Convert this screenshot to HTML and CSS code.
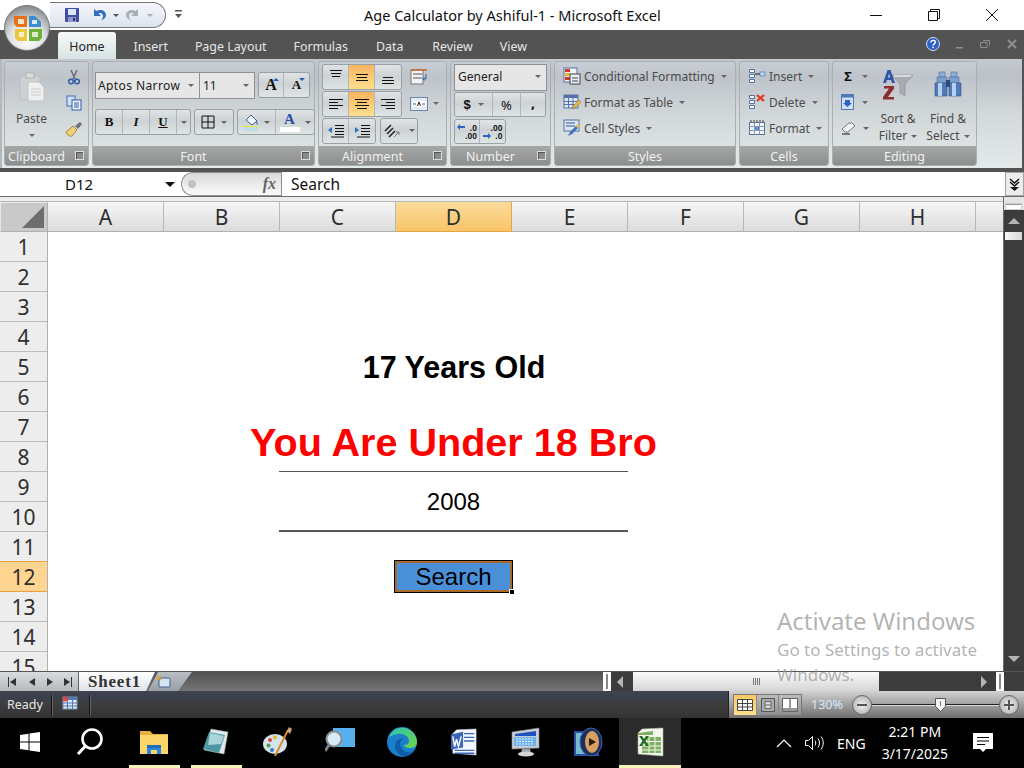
FILE: index.html
```html
<!DOCTYPE html>
<html>

<head>
<meta charset="utf-8">
<title>Age Calculator by Ashiful-1 - Microsoft Excel</title>
<link rel="stylesheet" href="styles.css">
</head>

<body>
<div class="app">

<!-- office button sits over the title bar and the tab strip -->
<div class="office-btn">
    <svg viewBox="0 0 46 46" width="46" height="46">
        <defs>
            <radialGradient id="orb" cx="50%" cy="75%" r="70%">
                <stop offset="0" stop-color="#ffffff"/>
                <stop offset="0.55" stop-color="#dfe1e2"/>
                <stop offset="1" stop-color="#8e9193"/>
            </radialGradient>
        </defs>
        <circle cx="23" cy="23" r="22.5" fill="url(#orb)" stroke="#6f7274"/>
        <path d="M10 11h13v11h-10l-3-3z" fill="#e8701f"/>
        <rect x="14" y="14" width="6" height="5" fill="#f5e3c8"/>
        <path d="M25 11h6l6 6v5h-12z" fill="#3d8ecb"/>
        <rect x="28" y="15" width="5" height="4" fill="#dbeaf5"/>
        <path d="M11 24h12v12h-9l-3-3z" fill="#f0c63c"/>
        <rect x="15" y="27" width="5" height="5" fill="#fbf2c9"/>
        <path d="M25 24h13v9l-3 3h-10z" fill="#6fb03c"/>
        <rect x="28" y="27" width="6" height="5" fill="#dcecc9"/>
    </svg>
</div>

<header class="titlebar">
    <div class="qat">
        <svg viewBox="0 0 16 16" width="16" height="16">
            <rect x="1" y="1" width="14" height="14" rx="1" fill="#3f4fa8"/>
            <rect x="4" y="2" width="8" height="6" fill="#dfe6f5"/>
            <rect x="4" y="10" width="8" height="5" fill="#8f98c8"/>
            <rect x="9" y="11" width="2" height="3" fill="#2b3580"/>
        </svg>
        <svg class="qat-undo" viewBox="0 0 16 16" width="16" height="16">
            <path d="M3 2v7h7L7.500 6.500c2-1 4.500 0 4.500 2.500 0 1.500-.5 3-2 4.500 3-1 5-3 5-5.500C15 4 10 1.500 5.500 4z" fill="#2f6fc0"/>
        </svg>
        <span class="caret qat-caret"></span>
        <svg class="qat-redo" viewBox="0 0 16 16" width="16" height="16">
            <path d="M13 2v7H6l2.500-2.500c-2-1-4.500 0-4.500 2.500 0 1.500.5 3 2 4.500-3-1-5-3-5-5.500C1 4 6 1.500 10.500 4z" fill="#a9b0b8"/>
        </svg>
        <span class="caret qat-caret qat-caret-off"></span>
    </div>
    <svg class="qat-more" viewBox="0 0 8 10" width="8" height="10">
        <rect x="0" y="0" width="7" height="1.500" fill="#555"/>
        <path d="M0 4h7L3.500 8z" fill="#555"/>
    </svg>
    <div class="title">Age Calculator by Ashiful-1 - Microsoft Excel</div>
    <div class="win-btns">
        <svg viewBox="0 0 14 14" width="14" height="14"><path d="M1 7.500h12" stroke="#111" fill="none"/></svg>
        <svg viewBox="0 0 14 14" width="14" height="14"><path d="M1.500 3.500h9v9h-9zM3.500 3.500v-2h9v9h-2" stroke="#111" fill="none"/></svg>
        <svg viewBox="0 0 14 14" width="14" height="14"><path d="M1 1l12 12M13 1L1 13" stroke="#111" fill="none"/></svg>
    </div>
</header>

<nav class="tabs">
    <span class="tab tab-active">Home</span>
    <span class="tab tab-second">Insert</span>
    <span class="tab">Page Layout</span>
    <span class="tab">Formulas</span>
    <span class="tab tab-data">Data</span>
    <span class="tab tab-review">Review</span>
    <span class="tab">View</span>
    <div class="tabs-right">
        <svg viewBox="0 0 14 14" width="14" height="14">
            <circle cx="7" cy="7" r="6.500" fill="#2e62c8" stroke="#cfdcf5"/>
            <path d="M4.800 5.300c.3-2.600 4.600-2.500 4.500 0 0 1.700-2.200 1.700-2.200 3.300" fill="none" stroke="#fff" stroke-width="1.400"/>
            <rect x="6.300" y="9.600" width="1.500" height="1.500" fill="#fff"/>
        </svg>
        <svg class="doc-btn" viewBox="0 0 10 10" width="10" height="10"><rect x="1" y="8" width="7" height="1.500" fill="#8d8f92"/></svg>
        <svg class="doc-btn" viewBox="0 0 10 10" width="10" height="10"><path d="M.5 3.500h6.500v5H.5zM3 1.500h6.500v5" fill="none" stroke="#8d8f92"/></svg>
        <svg class="doc-btn" viewBox="0 0 10 10" width="10" height="10"><path d="M1 1l8 8M9 1L1 9" stroke="#8d8f92" stroke-width="2"/></svg>
    </div>
</nav>

<section class="ribbon">

    <div class="grp grp-clipboard">
        <div class="grp-body">
            <div class="paste">
                <svg viewBox="0 0 26 30" width="26" height="30">
                    <rect x="1" y="4" width="20" height="24" rx="2" fill="#cfd0d2" stroke="#bcbdbf"/>
                    <rect x="7" y="1" width="8" height="5" fill="#dcdcdc" stroke="#b0b1b3"/>
                    <path d="M9 10h11l5 5v14H9z" fill="#efefef" stroke="#c4c4c6"/>
                    <path d="M12 17h10M12 20h10M12 23h10" stroke="#cbcbcd"/>
                </svg>
                <span class="paste-label">Paste</span>
                <span class="caret"></span>
            </div>
            <div class="clip-tools">
                <svg viewBox="0 0 14 16" width="14" height="16">
                    <path d="M4 1l4 9M10 1L6 10" stroke="#6a6e78" stroke-width="1.500" fill="none"/>
                    <circle cx="4" cy="12.500" r="2.300" fill="none" stroke="#2f5ca8" stroke-width="1.500"/>
                    <circle cx="10" cy="12.500" r="2.300" fill="none" stroke="#2f5ca8" stroke-width="1.500"/>
                </svg>
                <svg viewBox="0 0 16 16" width="16" height="16">
                    <rect x="1" y="1" width="8" height="10" fill="#cfe0f5" stroke="#3f6fb5"/>
                    <rect x="6" y="5" width="9" height="10" fill="#eaf2fb" stroke="#2f5ca8"/>
                    <path d="M8 8h5M8 10h5M8 12h5" stroke="#2f5ca8"/>
                </svg>
                <svg viewBox="0 0 18 16" width="18" height="16">
                    <path d="M1 11l7-6 4 4-5 6c-2 1-5-1-6-4z" fill="#ecd07a" stroke="#a98a3a"/>
                    <path d="M10 5l5-4 2 2-4 5z" fill="#6d6f80"/>
                </svg>
            </div>
        </div>
        <div class="grp-foot"><span>Clipboard</span><i class="launcher"></i></div>
    </div>

    <div class="grp grp-font">
        <div class="grp-body font-body">
            <div class="font-row">
                <div class="combo combo-font"><span>Aptos Narrow</span><span class="caret"></span></div>
                <div class="combo combo-size"><span>11</span><span class="caret"></span></div>
                <div class="btn-set size-set">
                    <span class="btn btn-grow">A<i class="mini-up"></i></span>
                    <span class="btn btn-shrink">A<i class="mini-down"></i></span>
                </div>
            </div>
            <div class="font-row font-row-2">
                <div class="btn-set">
                    <span class="btn btn-style style-b">B</span>
                    <span class="btn btn-style style-i">I</span>
                    <span class="btn btn-style style-u">U</span>
                    <span class="btn btn-caret"><span class="caret"></span></span>
                </div>
                <div class="btn-set">
                    <span class="btn btn-borders">
                        <svg viewBox="0 0 14 14" width="14" height="14"><path d="M1 1h12v12H1zM7 1v12M1 7h12" fill="none" stroke="#111"/></svg>
                        <span class="caret"></span>
                    </span>
                </div>
                <div class="btn-set">
                    <span class="btn btn-color">
                        <svg viewBox="0 0 16 18" width="16" height="18">
                            <path d="M3 7l5-5 6 6-5 4z" fill="#eef3f8" stroke="#3d5f8f"/>
                            <path d="M14 8c1 2 1 3 0 4-1-1-1-2 0-4z" fill="#3d6fc0"/>
                            <rect x="0" y="13" width="15" height="1" fill="#f2e82a"/>
                            <rect x="0" y="14" width="15" height="4" fill="#bcdcea"/>
                        </svg>
                        <span class="caret"></span>
                    </span>
                    <span class="btn btn-color">
                        <span class="font-color">A</span>
                        <span class="caret"></span>
                    </span>
                </div>
            </div>
        </div>
        <div class="grp-foot"><span>Font</span><i class="launcher"></i></div>
    </div>

    <div class="grp grp-align">
        <div class="grp-body align-body">
            <div class="align-row">
                <div class="btn-set">
                    <span class="btn btn-al"><svg viewBox="0 0 14 14" width="14" height="14"><path d="M1 .5h12M2 3.500h10M3 6.500h8" stroke="#111"/></svg></span>
                    <span class="btn btn-al btn-on"><svg viewBox="0 0 14 14" width="14" height="14"><path d="M1 4.500h12M2 7.500h10M1 10.500h12" stroke="#111"/></svg></span>
                    <span class="btn btn-al"><svg viewBox="0 0 14 14" width="14" height="14"><path d="M2 7.500h10M1 10.500h12M1 13.500h12" stroke="#111"/></svg></span>
                </div>
                <svg class="align-side" viewBox="0 0 18 16" width="18" height="16">
                    <rect x="1" y="1" width="12" height="14" fill="#f2f2f2" stroke="#777"/>
                    <path d="M1 1h16" stroke="#c4642a" stroke-width="1.500"/>
                    <path d="M3 5h9M3 9h9" stroke="#555"/>
                    <path d="M16 5v5h-3l1.500-1.500M13 10l1.500 1.500" stroke="#2f5ca8" fill="none"/>
                </svg>
            </div>
            <div class="align-row">
                <div class="btn-set">
                    <span class="btn btn-al"><svg viewBox="0 0 14 14" width="14" height="14"><path d="M0 2.500h14M0 5.500h9M0 8.500h14M0 11.500h9" stroke="#111"/></svg></span>
                    <span class="btn btn-al btn-on"><svg viewBox="0 0 14 14" width="14" height="14"><path d="M0 2.500h14M2 5.500h10M0 8.500h14M2 11.500h10" stroke="#111"/></svg></span>
                    <span class="btn btn-al"><svg viewBox="0 0 14 14" width="14" height="14"><path d="M0 2.500h14M5 5.500h9M0 8.500h14M5 11.500h9" stroke="#111"/></svg></span>
                </div>
                <svg class="align-side" viewBox="0 0 18 16" width="18" height="16">
                    <rect x=".5" y="1.500" width="17" height="13" fill="#e6edf6" stroke="#6f88a8"/>
                    <rect x="2" y="5" width="14" height="6" fill="#fff"/>
                    <path d="M3 8h3M12 8h3" stroke="#2f5ca8"/>
                    <path d="M7.500 10l1.500-4 1.500 4" stroke="#222" fill="none"/>
                </svg>
                <span class="caret"></span>
            </div>
            <div class="align-row">
                <div class="btn-set">
                    <span class="btn btn-al">
                        <svg viewBox="0 0 16 14" width="16" height="14"><path d="M7 1.500h9M7 4.500h9M7 7.500h9M7 10.500h9M3 13h13" stroke="#111"/><path d="M0 6l4-3v6z" fill="#2f6fc0"/></svg>
                    </span>
                    <span class="btn btn-al">
                        <svg viewBox="0 0 16 14" width="16" height="14"><path d="M7 1.500h9M7 4.500h9M7 7.500h9M7 10.500h9M3 13h13" stroke="#111"/><path d="M5 6L1 3v6z" fill="#2f6fc0"/></svg>
                    </span>
                </div>
                <div class="btn-set">
                    <span class="btn btn-orient">
                        <svg viewBox="0 0 16 16" width="16" height="16"><path d="M1 8l6-6M3 11l6-6M5 14l6-6" stroke="#222" stroke-width="1.500"/><path d="M10 14l5-5M15 9v3M15 9h-3" stroke="#777" fill="none"/></svg>
                        <span class="caret"></span>
                    </span>
                </div>
            </div>
        </div>
        <div class="grp-foot"><span>Alignment</span><i class="launcher"></i></div>
    </div>

    <div class="grp grp-number">
        <div class="grp-body number-body">
            <div class="combo combo-number"><span>General</span><span class="caret"></span></div>
            <div class="btn-set number-set">
                <span class="btn btn-money">$<span class="caret"></span></span>
                <span class="btn btn-pct">%</span>
                <span class="btn btn-comma">,</span>
            </div>
            <div class="btn-set decimal-set">
                <span class="btn btn-dec"><i class="dec-arrow dec-left"></i><b>.0<br>.00</b></span>
                <span class="btn btn-dec"><i class="dec-arrow dec-right"></i><b>.00<br>.0</b></span>
            </div>
        </div>
        <div class="grp-foot"><span>Number</span><i class="launcher"></i></div>
    </div>

    <div class="grp grp-styles">
        <div class="grp-body list-body">
            <div class="list-item">
                <svg viewBox="0 0 18 18" width="18" height="18">
                    <rect x="1" y="1" width="13" height="14" fill="#eef3fa" stroke="#5572a5"/>
                    <rect x="2" y="2" width="5" height="3" fill="#d23a2a"/>
                    <rect x="2" y="6" width="5" height="3" fill="#f0b429"/>
                    <rect x="2" y="10" width="5" height="3" fill="#d23a2a"/>
                    <rect x="7" y="7" width="10" height="10" fill="#e8eef5" stroke="#444"/>
                    <path d="M9 11h6M9 14h6" stroke="#444"/>
                </svg>
                <span>Conditional Formatting</span><span class="caret"></span>
            </div>
            <div class="list-item">
                <svg viewBox="0 0 18 18" width="18" height="18">
                    <rect x="1" y="2" width="14" height="13" fill="#dbe6f4" stroke="#5572a5"/>
                    <rect x="1" y="2" width="14" height="3" fill="#5572a5"/>
                    <path d="M1 8.500h14M1 11.500h14M5.500 5v10M10 5v10" stroke="#5572a5"/>
                    <path d="M9 16l2-4 5-5 2 2-5 5z" fill="#e8b840" stroke="#a06e1a" stroke-width=".5"/>
                </svg>
                <span>Format as Table</span><span class="caret"></span>
            </div>
            <div class="list-item">
                <svg viewBox="0 0 18 18" width="18" height="18">
                    <rect x="1" y="1" width="15" height="11" fill="#dbe6f4" stroke="#5572a5"/>
                    <path d="M3 4h9M3 7h9" stroke="#6f88b8" stroke-width="1.500"/>
                    <path d="M5 17l2-4 6-6 2 2-6 6z" fill="#3f6fc0"/>
                    <path d="M13 7l2-2 2 2-2 2z" fill="#e8b840"/>
                </svg>
                <span>Cell Styles</span><span class="caret"></span>
            </div>
        </div>
        <div class="grp-foot grp-foot-plain"><span>Styles</span></div>
    </div>

    <div class="grp grp-cells">
        <div class="grp-body list-body">
            <div class="list-item">
                <svg viewBox="0 0 18 18" width="18" height="18">
                    <path d="M1.500 2.500h5v3h-5zM1.500 7.500h5v3h-5zM1.500 12.500h5v3h-5z" fill="#f4f7fb" stroke="#5572a5"/>
                    <path d="M7 7h5" stroke="#111"/>
                    <rect x="12" y="5" width="5" height="4" fill="#bcd6f0" stroke="#3d6fb0" stroke-width=".6"/>
                </svg>
                <span>Insert</span><span class="caret"></span>
            </div>
            <div class="list-item">
                <svg viewBox="0 0 18 18" width="18" height="18">
                    <path d="M1.500 2.500h5v3h-5zM1.500 7.500h5v3h-5zM1.500 12.500h5v3h-5z" fill="#f4f7fb" stroke="#5572a5"/>
                    <path d="M9 2l7 6M16 2L9 8" stroke="#e03a20" stroke-width="2.200"/>
                </svg>
                <span>Delete</span><span class="caret"></span>
            </div>
            <div class="list-item">
                <svg viewBox="0 0 18 18" width="18" height="18">
                    <rect x="1.500" y="3.500" width="15" height="12" fill="#f2f5fa" stroke="#5d6f90"/>
                    <path d="M1.500 7.500h15M1.500 11.500h15M6.500 3.500v12M11.500 3.500v12" stroke="#8c99b2"/>
                    <rect x="7" y="8" width="4" height="3" fill="#4f8fdc"/>
                    <path d="M3 1v2M6 1v2M9 1v2M12 1v2M15 1v2" stroke="#444"/>
                </svg>
                <span>Format</span><span class="caret"></span>
            </div>
        </div>
        <div class="grp-foot grp-foot-plain"><span>Cells</span></div>
    </div>

    <div class="grp grp-editing">
        <div class="grp-body edit-body">
            <div class="edit-small">
                <div class="edit-item"><span class="sigma">Σ</span><span class="caret"></span></div>
                <div class="edit-item">
                    <svg viewBox="0 0 14 16" width="14" height="16">
                        <rect x=".5" y=".5" width="12" height="15" fill="#cfe0f5" stroke="#4f79b8"/>
                        <rect x=".5" y=".5" width="12" height="3" fill="#4f79b8"/>
                        <path d="M4 6h5v3h2l-4.500 4L2 9h2z" fill="#2f62c0"/>
                    </svg>
                    <span class="caret"></span>
                </div>
                <div class="edit-item">
                    <svg viewBox="0 0 15 14" width="15" height="14">
                        <path d="M1 8l7-6h3l3 3-7 6H4z" fill="#f3f5f8" stroke="#6b7584"/>
                        <path d="M1 13h8" stroke="#111"/>
                    </svg>
                    <span class="caret"></span>
                </div>
            </div>
            <div class="edit-big">
                <svg viewBox="0 0 32 32" width="32" height="32">
                    <path d="M10 6h21l-8 9v12l-5-3v-9z" fill="#a8acb1" stroke="#85898f" stroke-width=".6"/>
                    <path d="M11 6h19l-2 2H13z" fill="#d9dcdf"/>
                    <path d="M1 14L5.500 1h3L13 14h-3l-1-3H5l-1 3zM5.800 8.500h2.400L7 4.500z" fill="#2f55a8"/>
                    <path d="M2 17h10v2.500L6 28h6v2.500H1V28l6-8.500H2z" fill="#8a2f2f"/>
                </svg>
                <span class="edit-big-label">Sort &amp;<br>Filter<span class="caret"></span></span>
            </div>
            <div class="edit-big">
                <svg viewBox="0 0 32 32" width="32" height="32">
                    <path d="M7 3h6v5H7zM19 3h6v5h-6z" fill="#8fb0d8" stroke="#4f6f9f" stroke-width=".6"/>
                    <path d="M5 8h10v6H5zM17 8h10v6H17z" fill="#7d9fcb" stroke="#4f6f9f" stroke-width=".6"/>
                    <path d="M3 14h12v13H3zM17 14h12v13H17z" fill="#4f7cb8" stroke="#35527f" stroke-width=".6"/>
                    <path d="M6 14h4v13H6zM20 14h4v13h-4z" fill="#b5cfec"/>
                    <rect x="14" y="11" width="4" height="7" fill="#2f4a78"/>
                </svg>
                <span class="edit-big-label">Find &amp;<br>Select<span class="caret"></span></span>
            </div>
        </div>
        <div class="grp-foot grp-foot-plain"><span>Editing</span></div>
    </div>

</section>

<section class="formula-bar">
    <div class="name-box"><span>D12</span><i class="name-arrow"></i></div>
    <div class="fx-pill"><i class="fx-dot"></i><span class="fx">fx</span></div>
    <div class="formula-input">Search</div>
    <div class="formula-expand">
        <svg viewBox="0 0 11 13" width="11" height="13"><path d="M1 1l4.500 4L10 1M1 4l4.500 4L10 4" fill="none" stroke="#111" stroke-width="1.500"/><path d="M1 9h9l-4.500 4z" fill="#111"/></svg>
    </div>
</section>

<section class="sheet">
    <div class="sheet-main">
        <div class="col-head">
            <div class="corner"><i></i></div>
            <div class="col">A</div>
            <div class="col">B</div>
            <div class="col">C</div>
            <div class="col col-on">D</div>
            <div class="col">E</div>
            <div class="col">F</div>
            <div class="col">G</div>
            <div class="col">H</div>
            <div class="col col-rest"></div>
        </div>
        <div class="sheet-body">
            <div class="row-head">
                <div class="row">1</div>
                <div class="row">2</div>
                <div class="row">3</div>
                <div class="row">4</div>
                <div class="row">5</div>
                <div class="row">6</div>
                <div class="row">7</div>
                <div class="row">8</div>
                <div class="row">9</div>
                <div class="row">10</div>
                <div class="row">11</div>
                <div class="row row-on">12</div>
                <div class="row">13</div>
                <div class="row">14</div>
                <div class="row">15</div>
            </div>
            <div class="cells">
                <div class="cell cell-age">17 Years Old</div>
                <div class="cell cell-msg">You Are Under 18 Bro</div>
                <div class="cell cell-year">2008</div>
                <div class="cell cell-btn">Search</div>
            </div>
        </div>
    </div>
    <div class="vscroll">
        <i class="split-h"></i>
        <div class="vscroll-up"><i class="arrow-up"></i></div>
        <i class="vscroll-thumb"></i>
        <i class="arrow-down"></i>
    </div>
</section>

<section class="sheet-tabs">
    <div class="sheet-nav">
        <svg viewBox="0 0 70 12" width="70" height="12">
            <path d="M6.500 1v10" stroke="#333"/><path d="M14 2v8l-6-4z" fill="#333"/>
            <path d="M33 2v8l-6-4z" fill="#333"/>
            <path d="M45 2v8l6-4z" fill="#333"/>
            <path d="M62 2v8l6-4z" fill="#333"/><path d="M69.500 1v10" stroke="#333"/>
        </svg>
    </div>
    <div class="sheet-tab">Sheet1</div>
    <div class="new-tab">
        <svg viewBox="0 0 16 14" width="16" height="14">
            <rect x="3" y="3" width="11" height="9" rx="1" fill="#d7e3f2" stroke="#3f5f8f"/>
            <path d="M3 3l2 2M1 1l2 2M5 1L1 5" stroke="#e8a020" stroke-width="1.500"/>
        </svg>
    </div>
    <div class="tabs-fill"></div>
    <i class="split-v"></i>
    <div class="hscroll">
        <i class="arrow-left"></i>
        <div class="hscroll-thumb"><i class="grip"></i></div>
        <i class="arrow-right"></i>
    </div>
    <i class="split-v"></i>
    <div class="tabs-end"></div>
</section>

<footer class="statusbar">
    <span class="ready">Ready</span>
    <i class="status-sep"></i>
    <svg class="macro" viewBox="0 0 16 14" width="16" height="14">
        <rect x="1" y="1" width="14" height="12" fill="#dce6f5" stroke="#7f93b5"/>
        <rect x="1" y="1" width="14" height="3" fill="#5577b0"/>
        <path d="M1 7h14M1 10h14M5.500 4v9M10.500 4v9" stroke="#5577b0"/>
        <circle cx="3" cy="3" r="2.500" fill="#e0443a"/>
    </svg>
    <i class="status-sep status-sep-2"></i>
    <div class="status-right">
        <div class="views">
            <span class="view view-on">
                <svg viewBox="0 0 16 12" width="16" height="12"><path d="M.5.500h15v11H.5zM.5 4.500h15M.5 8h15M5.500.5v11M10.500.5v11" fill="#fff" stroke="#444"/></svg>
            </span>
            <span class="view">
                <svg viewBox="0 0 16 14" width="16" height="14"><path d="M1.500.5h13v13h-13z" fill="#aaa" stroke="#555"/><path d="M5 3.500h6v7H5zM5 7h6" fill="#ddd" stroke="#666"/></svg>
            </span>
            <span class="view">
                <svg viewBox="0 0 16 14" width="16" height="14"><path d="M.5.500h15v13H.5z" fill="#999" stroke="#666"/><path d="M1 1h6v9H1zM9 1h6v9H9z" fill="#fff"/></svg>
            </span>
        </div>
        <span class="zoom-pct">130%</span>
        <span class="zoom-btn"><i class="zoom-minus"></i></span>
        <div class="zoom-track">
            <svg class="zoom-thumb" viewBox="0 0 11 14" width="11" height="14"><path d="M.5.500h10v8l-5 5-5-5z" fill="#f1f1f1" stroke="#555"/><path d="M5.500 3v5" stroke="#777"/></svg>
        </div>
        <span class="zoom-btn"><i class="zoom-minus"></i><i class="zoom-plus"></i></span>
    </div>
</footer>

<div class="watermark">
    <div class="wm-title">Activate Windows</div>
    <div class="wm-sub">Go to Settings to activate Windows.</div>
</div>

<footer class="taskbar">
    <div class="task task-start">
        <svg viewBox="0 0 20 20" width="20" height="20"><path d="M0 3l8.500-1.200v7.700H0zM9.500 1.600L20 0v9.500H9.500zM0 10.500h8.500v7.700L0 17zM9.500 10.500H20V20L9.500 18.400z" fill="#fff"/></svg>
    </div>
    <div class="task task-search">
        <svg viewBox="0 0 28 28" width="28" height="28"><circle cx="16" cy="11" r="9.500" fill="none" stroke="#fff" stroke-width="2.600"/><path d="M9.500 18L2 26" stroke="#fff" stroke-width="3"/></svg>
    </div>
    <div class="task task-first task-open">
        <svg viewBox="0 0 28 24" width="28" height="24">
            <path d="M0 1h10l3 3h15v20H0z" fill="#e9b13a"/>
            <rect x="0" y="5" width="28" height="19" fill="#fbd66b"/>
            <path d="M7 24v-8h14v8h-4v-4h-6v4z" fill="#2b88d8"/>
            <rect x="7" y="15" width="14" height="3" fill="#1f6fb8"/>
        </svg>
    </div>
    <div class="task task-open">
        <svg viewBox="0 0 28 28" width="28" height="28">
            <path d="M9 1l17 3-4 22L2 22z" fill="#dfe9ec" stroke="#9fb0b5" stroke-width=".5"/>
            <path d="M7 4l16 3-6 18L1 21z" fill="#4e97a4"/>
            <path d="M8 5l14 3-3 8-13 1z" fill="#a8d4da"/>
        </svg>
    </div>
    <div class="task">
        <svg viewBox="0 0 30 30" width="30" height="30">
            <ellipse cx="12" cy="17" rx="12" ry="10" fill="#d4e4ee"/>
            <circle cx="7" cy="13" r="2" fill="#d8483a"/>
            <circle cx="12" cy="10.500" r="2" fill="#e8b830"/>
            <circle cx="5.500" cy="18.500" r="2" fill="#4aa04a"/>
            <circle cx="9" cy="23" r="2" fill="#3a78c8"/>
            <path d="M12 29L25 3" stroke="#e0892a" stroke-width="2"/>
            <path d="M24 4l2-4 3 2-2 5z" fill="#c9a878"/>
        </svg>
    </div>
    <div class="task">
        <svg viewBox="0 0 30 30" width="30" height="30">
            <rect x="8" y="1" width="22" height="19" fill="#57b0ee"/>
            <circle cx="9" cy="12" r="7.500" fill="#d8eaf6" stroke="#8a8f96" stroke-width="2"/>
            <path d="M4 18l-4 6" stroke="#7d8288" stroke-width="3"/>
        </svg>
    </div>
    <div class="task">
        <svg viewBox="0 0 30 30" width="30" height="30">
            <defs>
                <linearGradient id="edge" x1="0" y1="0" x2="1" y2="1">
                    <stop offset="0" stop-color="#2fc4b2"/>
                    <stop offset="1" stop-color="#6fd44a"/>
                </linearGradient>
            </defs>
            <circle cx="15" cy="15" r="15" fill="#1a7fc8"/>
            <path d="M2 10C5 2 14-1 21 2c6 3 9 8 9 13 0 4-3 6-7 6-3 0-6-1-6-3 3 0 5-1 5-4 0-5-6-8-11-7-4 .5-7 2-9 3z" fill="url(#edge)"/>
            <path d="M8 19c0-5 4-8 9-7-4 1-5 4-3 8 2 5 7 7 13 4-3 4-8 6-12 5-4-2-7-6-7-10z" fill="#0f5da8"/>
        </svg>
    </div>
    <div class="task">
        <svg viewBox="0 0 30 30" width="28" height="28">
            <path d="M7 2l21-1v28L3 27V6z" fill="#f4f6fb" stroke="#b6bfd6" stroke-width=".6"/>
            <path d="M1 7l13-3v17L1 23z" fill="#3a67b8"/>
            <path d="M15 6h11M15 10h11M15 14h11M5 24h21M5 27h21" stroke="#3a67b8" stroke-width="1.500"/>
            <path d="M3 9l2 11 2-8 2 8 3-11" fill="none" stroke="#fff" stroke-width="1.500"/>
        </svg>
    </div>
    <div class="task">
        <svg viewBox="0 0 30 30" width="30" height="30">
            <path d="M1 5l27-4v20L1 22z" fill="#c8ccd2" stroke="#8a8f96" stroke-width=".6"/>
            <path d="M4 7l21-3v5H4z" fill="#1f50c0"/>
            <path d="M3 10h22v9H3z" fill="#6eb3ec"/>
            <path d="M5 12h18M5 14.500h18M5 17h18" stroke="#dff0fc" stroke-dasharray="2 1"/>
            <path d="M11 22h8l1 4h-10z" fill="#9ea3a8"/>
            <ellipse cx="15" cy="27" rx="8" ry="2.500" fill="#d4d6d8"/>
        </svg>
    </div>
    <div class="task">
        <svg viewBox="0 0 30 30" width="30" height="30">
            <rect x="1" y="4" width="25" height="25" fill="#2c4fa8"/>
            <rect x="3" y="6" width="21" height="21" fill="#78bcd0"/>
            <ellipse cx="18" cy="15" rx="11" ry="14" fill="#1b2e5e" stroke="#3b64a8"/>
            <ellipse cx="19" cy="15" rx="7" ry="11" fill="#d8a060"/>
            <path d="M16 11l7 4-7 4z" fill="#2a1a10"/>
        </svg>
    </div>
    <div class="task task-current">
        <svg viewBox="0 0 30 30" width="30" height="30">
            <path d="M7 2l21-1v28L3 27V6z" fill="#f2f6ee" stroke="#a8b89a" stroke-width=".6"/>
            <path d="M3 6l15-2v4H3z" fill="#7fb060"/>
            <path d="M12 10h14v16H7v-8h5z" fill="#7fb060"/>
            <path d="M12 14.500h14M7 19h19M7 23h19M14 10v16M20 10v16" stroke="#f2f6ee"/>
            <path d="M4 9h3l2 3 2-3h3l-3.500 5 3.500 5h-3l-2-3-2 3H4l3.500-5z" fill="#1e6b22"/>
        </svg>
    </div>
    <div class="tray">
        <svg viewBox="0 0 16 9" width="16" height="9"><path d="M1 8l7-7 7 7" fill="none" stroke="#fff" stroke-width="1.200"/></svg>
        <svg viewBox="0 0 22 16" width="22" height="16">
            <path d="M1.500 5.500h3l4-4v13l-4-4h-3z" fill="none" stroke="#fff"/>
            <path d="M11 5.500c1 1.500 1 3.500 0 5M14 3.500c2 3 2 6 0 9M17 1.500c3 4 3 9 0 13" fill="none" stroke="#fff"/>
        </svg>
        <span class="lang">ENG</span>
        <div class="clock"><span>2:21 PM</span><span>3/17/2025</span></div>
        <svg class="notify" viewBox="0 0 20 20" width="20" height="20">
            <path d="M0 0h20v16h-7l-3 3-3-3H0z" fill="#fff"/>
            <path d="M4 4.500h12M4 8h12M4 11.500h8" stroke="#000"/>
        </svg>
    </div>
</footer>

</div>
</body>

</html>
```

FILE: styles.css
```css
html, body {
    margin: 0;
    padding: 0;
    background: #fff;
}

.app {
    position: relative;
    width: 1024px;
    height: 768px;
    overflow: hidden;
    font-family: "Noto Sans", "Liberation Sans", sans-serif;
    font-size: 12px;
    color: #4b4b4b;
    display: flex;
    flex-direction: column;
}

.caret {
    display: inline-block;
    width: 0;
    height: 0;
    border-left: 3px solid transparent;
    border-right: 3px solid transparent;
    border-top: 3px solid #666;
}

/* title bar */
.office-btn {
    position: absolute;
    left: 4px;
    top: 5px;
    width: 46px;
    height: 46px;
    z-index: 3;
}

.titlebar {
    height: 30px;
    flex: none;
    display: flex;
    align-items: center;
    background: #fff;
}

.qat {
    margin-left: 50px;
    width: 116px;
    height: 26px;
    box-sizing: border-box;
    border: 1px solid #777;
    border-left: 0;
    border-radius: 0 13px 13px 0;
    background: linear-gradient(#f4f6fb, #dde3ee);
    display: flex;
    align-items: center;
    padding-left: 14px;
}
.qat-undo {
    margin-left: 11px;
}
.qat-caret {
    margin-left: 6px;
    border-top-color: #555;
}
.qat-redo {
    margin-left: 6px;
}
.qat-caret-off {
    border-top-color: #aaa;
}
.qat-more {
    margin-left: 9px;
}
.title {
    margin-left: 181px;
    width: 297px;
    font-size: 14.5px;
    color: #111;
    white-space: nowrap;
}
.win-btns {
    margin-left: auto;
    margin-right: 25px;
    display: flex;
    gap: 44px;
}

/* ribbon tabs */
.tabs {
    height: 29px;
    flex: none;
    background: #535353;
    display: flex;
    align-items: flex-end;
    padding-left: 58px;
}
.tab {
    height: 27px;
    line-height: 29px;
    padding: 0 13.5px;
    color: #e6e6e6;
    font-size: 12.4px;
    white-space: nowrap;
}
.tab-active {
    width: 58px;
    box-sizing: border-box;
    padding: 0;
    text-align: center;
    color: #222;
    background: linear-gradient(#f6f8f8, #d8e3e3);
    border-radius: 3px 3px 0 0;
}
.tab-second {
    margin-left: 4px;
}
.tab-data {
    margin-left: 1px;
}
.tab-review {
    margin-left: 2px;
}
.tabs-right {
    margin-left: auto;
    height: 100%;
    display: flex;
    align-items: center;
    gap: 15px;
    padding-right: 7px;
    padding-bottom: 2px;
    box-sizing: border-box;
}
.tabs-right .doc-btn:last-child {
    margin-left: 2px;
}

/* ribbon */
.ribbon {
    height: 109px;
    flex: none;
    box-sizing: border-box;
    padding: 2px 2px 2px 4px;
    display: flex;
    gap: 3px;
    background:
        linear-gradient(#c4c8cf, #bcc1c9 16%, #d3d8da 50%, #e4eaea) left top / calc(100% - 2px) 100% no-repeat,
        #535353;
    box-shadow: inset 2px 0 0 #b4b8bd;
}
.grp {
    box-sizing: border-box;
    border: 1px solid #a9afb2;
    border-radius: 3px;
    display: flex;
    flex-direction: column;
    background: linear-gradient(#c8ccd3, #bfc4cb 15%, #d3d8da 55%, #e2e9e8);
}
.grp-clipboard { width: 85px; }
.grp-font { width: 223px; }
.grp-align { width: 129px; }
.grp-number { width: 101px; }
.grp-styles { width: 182px; }
.grp-cells { width: 90px; }
.grp-editing { width: 145px; }

.grp-body {
    flex: 1;
    min-height: 0;
}
.grp-foot {
    height: 19px;
    flex: none;
    box-sizing: border-box;
    display: flex;
    align-items: center;
    justify-content: center;
    position: relative;
    padding: 1px 20px 0 0;
    font-size: 12.5px;
    color: #f1f1f1;
    background: linear-gradient(#a6a8a8, #8d8f8f);
    border-radius: 0 0 2px 2px;
}
.grp-foot-plain {
    padding-right: 0;
}
.launcher {
    position: absolute;
    right: 4px;
    top: 5px;
    width: 7px;
    height: 7px;
    border: 1px solid #ddd;
    background: #8a8c8c;
    box-shadow: inset 1px 1px 0 #555;
}

/* clipboard */
.grp-clipboard .grp-body {
    display: flex;
}
.paste {
    width: 53px;
    display: flex;
    flex-direction: column;
    align-items: center;
    padding-top: 10px;
    box-sizing: border-box;
}
.paste-label {
    margin-top: 8px;
}
.paste .caret {
    margin-top: 7px;
}
.clip-tools {
    display: flex;
    flex-direction: column;
    align-items: center;
    width: 20px;
    padding: 7px 0 0 6px;
    gap: 10px;
}

/* shared button sets */
.btn-set {
    display: flex;
    box-sizing: border-box;
    border: 1px solid #9aa1a4;
    border-radius: 3px;
    background: linear-gradient(#e0e4e6, #cdd2d4 45%, #dfe4e4);
}
.btn {
    display: flex;
    align-items: center;
    justify-content: center;
    box-sizing: border-box;
    border-right: 1px solid #b0b6b9;
    color: #111;
}
.btn:last-child {
    border-right: 0;
}
.combo {
    display: flex;
    align-items: center;
    box-sizing: border-box;
    border: 1px solid #8f9294;
    background: #e6e6e6;
    color: #222;
    white-space: nowrap;
}
.combo .caret {
    margin-left: auto;
}

/* font */
.font-body {
    padding: 10px 0 0 2px;
}
.font-row {
    display: flex;
}
.font-row-2 {
    margin-top: 10px;
    gap: 3px;
}
.combo-font {
    width: 105px;
    height: 27px;
    padding-left: 2px;
    padding-right: 5px;
    letter-spacing: 0.4px;
}
.combo-size {
    width: 56px;
    height: 27px;
    margin-left: -1px;
    padding-left: 3px;
    padding-right: 5px;
}
.size-set {
    margin-left: 3px;
    height: 26px;
    width: 52px;
}
.btn-grow, .btn-shrink {
    width: 26px;
    font-family: "Liberation Serif", serif;
    font-weight: bold;
    font-size: 16px;
    position: relative;
}
.btn-shrink {
    font-size: 13px;
}
.mini-up, .mini-down {
    position: absolute;
    right: 4px;
    top: 5px;
    width: 0;
    height: 0;
    border-left: 3px solid transparent;
    border-right: 3px solid transparent;
}
.mini-up {
    border-bottom: 3px solid #2f5ca8;
}
.mini-down {
    border-top: 3px solid #2f5ca8;
}
.font-row-2 .btn-set {
    height: 26px;
}
.btn-style {
    width: 27px;
    font-family: "Liberation Serif", serif;
    font-weight: bold;
    font-size: 13px;
}
.style-i {
    font-style: italic;
}
.style-u {
    text-decoration: underline;
}
.btn-caret {
    width: 13px;
}
.btn-borders {
    width: 38px;
    gap: 6px;
}
.btn-color {
    width: 38px;
    gap: 5px;
}
.font-color {
    width: 20px;
    height: 20px;
    box-sizing: border-box;
    font-family: "Liberation Serif", serif;
    font-weight: bold;
    font-size: 15px;
    line-height: 15px;
    text-align: center;
    color: #2b4fa8;
    border-bottom: 5px solid #fff;
}

/* alignment */
.align-body {
    padding: 2px 0 0 3px;
    display: flex;
    flex-direction: column;
    gap: 2px;
}
.align-row {
    display: flex;
    align-items: center;
    height: 25px;
}
.btn-al {
    width: 26px;
    height: 24px;
}
.btn-on {
    background: linear-gradient(#fbb45f, #fedf8e);
}
.align-side {
    margin-left: 8px;
}
.align-row .caret {
    margin-left: 5px;
}
.align-row .btn-set + .btn-set {
    margin-left: 4px;
}
.btn-orient {
    width: 36px;
    height: 24px;
    gap: 4px;
}

/* number */
.number-body {
    padding: 2px 0 0 3px;
    display: flex;
    flex-direction: column;
    gap: 1px;
}
.combo-number {
    width: 93px;
    height: 27px;
    padding-left: 3px;
    padding-right: 5px;
    padding-bottom: 2px;
}
.number-set {
    width: 92px;
    height: 25px;
}
.btn-money {
    width: 38px;
    gap: 7px;
    font-family: "Liberation Sans", sans-serif;
    font-weight: bold;
    font-size: 13px;
}
.btn-pct {
    width: 28px;
    font-size: 13px;
}
.btn-comma {
    flex: 1;
    font-weight: bold;
    font-size: 14px;
    padding-bottom: 5px;
}
.decimal-set {
    margin-top: 1px;
    width: 52px;
    height: 25px;
}
.btn-dec {
    width: 26px;
    position: relative;
}
.btn-dec b {
    font-family: "Liberation Sans", sans-serif;
    font-size: 8.5px;
    line-height: 8px;
    text-align: right;
    margin-left: 8px;
}
.dec-arrow {
    position: absolute;
    width: 5px;
    height: 2px;
    background: #2f62c0;
}
.dec-arrow::before {
    content: "";
    position: absolute;
    top: -2px;
    width: 0;
    height: 0;
    border-top: 3px solid transparent;
    border-bottom: 3px solid transparent;
}
.dec-left {
    left: 5px;
    top: 6px;
}
.dec-left::before {
    left: -3px;
    border-right: 3px solid #2f62c0;
}
.dec-right {
    left: 3px;
    top: 15px;
}
.dec-right::before {
    right: -3px;
    border-left: 3px solid #2f62c0;
}

/* styles and cells */
.list-body {
    padding: 1px 0 0 8px;
    display: flex;
    flex-direction: column;
}
.list-item {
    height: 26px;
    display: flex;
    align-items: center;
    gap: 3px;
    white-space: nowrap;
}
.list-item .caret {
    margin-left: 3px;
}

/* editing */
.edit-body {
    display: flex;
}
.edit-small {
    padding: 1px 0 0 8px;
    width: 32px;
    display: flex;
    flex-direction: column;
}
.edit-item {
    height: 26px;
    display: flex;
    align-items: center;
    gap: 7px;
}
.sigma {
    width: 14px;
    text-align: center;
    color: #111;
    font-weight: bold;
    font-size: 13px;
}
.edit-big {
    width: 50px;
    display: flex;
    flex-direction: column;
    align-items: center;
    padding-top: 7px;
}
.edit-big-label {
    margin-top: 9px;
    line-height: 17px;
    text-align: center;
    white-space: nowrap;
}
.edit-big-label .caret {
    margin-left: 4px;
    vertical-align: 2px;
}

/* formula bar */
.formula-bar {
    height: 24px;
    flex: none;
    margin-top: 4px;
    display: flex;
    position: relative;
    background: #fff;
    box-shadow: 0 -4px 0 #535353;
    font-size: 15px;
    color: #111;
}
.name-box {
    width: 176px;
    display: flex;
    align-items: center;
    padding-left: 65px;
    box-sizing: border-box;
}
.name-arrow {
    margin-left: auto;
    margin-right: 1px;
    width: 0;
    height: 0;
    border-left: 5px solid transparent;
    border-right: 5px solid transparent;
    border-top: 5px solid #111;
}
.fx-pill {
    margin-left: 5px;
    width: 100px;
    box-sizing: border-box;
    border: 1px solid #8f8f8f;
    border-right: 0;
    border-radius: 12px 0 0 12px;
    background: linear-gradient(#d9d9d9, #fafafa);
    display: flex;
    align-items: center;
    padding: 0 5px 0 6px;
}
.fx-dot {
    width: 8px;
    height: 8px;
    border-radius: 50%;
    background: #c2c2c2;
}
.fx {
    margin-left: auto;
    font-family: "Liberation Serif", serif;
    font-style: italic;
    font-weight: bold;
    font-size: 16px;
    color: #666;
}
.formula-input {
    flex: 1;
    border-left: 1px solid #8f8f8f;
    padding-left: 9px;
    line-height: 24px;
    font-size: 15.5px;
}
.formula-expand {
    width: 19px;
    margin-left: 1px;
    box-sizing: border-box;
    border: 1px solid #a5a5a5;
    background: #ececec;
    display: flex;
    align-items: center;
    justify-content: center;
}

/* sheet */
.sheet {
    height: 475px;
    flex: none;
    display: flex;
    box-sizing: border-box;
    border-top: 1px solid #6b6b6b;
    background: #ededed;
}
.sheet-main {
    flex: 1;
    min-width: 0;
    padding-top: 4px;
    display: flex;
    flex-direction: column;
}
.col-head {
    height: 31px;
    flex: none;
    display: grid;
    grid-template-columns: 48px repeat(8, 116px) 1fr;
    border-top: 1px solid #b8b8b8;
    box-sizing: border-box;
    font-size: 21px;
    color: #2f2f2f;
}
.corner {
    box-sizing: border-box;
    background: #c9c9c9;
    border: 1px solid #e8e8e8;
    border-bottom-color: #b0b0b0;
    border-right-color: #b0b0b0;
    display: flex;
    justify-content: flex-end;
    align-items: flex-end;
    padding: 0 3px 3px 0;
}
.corner i {
    width: 0;
    height: 0;
    border-left: 22px solid transparent;
    border-bottom: 22px solid #6e6e6e;
}
.col {
    box-sizing: border-box;
    border-right: 1px solid #b8b8b8;
    border-bottom: 1px solid #b0b0b0;
    background: linear-gradient(#f6f6f6, #dcdcdc);
    display: flex;
    align-items: center;
    justify-content: center;
}
.col-on {
    background: linear-gradient(#fbdc9c, #f8c468);
    border-color: #e5a64a;
}
.col-rest {
    border-right: 0;
}

.sheet-body {
    flex: 1;
    min-height: 0;
    display: flex;
    overflow: hidden;
    background: #fff;
}
.row-head {
    width: 48px;
    flex: none;
    box-sizing: border-box;
    border-right: 1px solid #b0b0b0;
    background: #ededed;
    font-size: 21px;
    color: #2f2f2f;
}
.row {
    height: 30px;
    box-sizing: border-box;
    border-bottom: 1px solid #bcbcbc;
    display: flex;
    align-items: center;
    justify-content: center;
}
.row-on {
    background: #ffd591;
    border-top: 1px solid #f0a040;
    border-bottom: 1px solid #f0a040;
    margin-top: -1px;
    height: 31px;
}

.cells {
    flex: 1;
    display: grid;
    grid-template-columns: repeat(8, 116px) 1fr;
    grid-template-rows: repeat(15, 30px);
    font-family: "Liberation Sans", Arial, sans-serif;
    color: #000;
}
.cell {
    grid-column: 3 / 6;
    display: flex;
    align-items: center;
    justify-content: center;
    white-space: nowrap;
}
.cell-age {
    grid-row: 5;
    font-size: 30.5px;
    font-weight: bold;
}
.cell-msg {
    grid-row: 7 / 9;
    margin-left: -1px;
    padding-top: 2px;
    font-size: 39.6px;
    font-weight: bold;
    color: #f00;
    border-bottom: 1px solid #555;
}
.cell-year {
    grid-row: 9 / 11;
    margin-left: -1px;
    padding-top: 2px;
    font-size: 24px;
    border-bottom: 2px solid #555;
}
.cell-btn {
    grid-column: 4;
    grid-row: 12;
    margin: -2px -1px -1px -2px;
    box-sizing: border-box;
    font-size: 24px;
    background: #4a90d9;
    border: 1px solid #000;
    box-shadow: inset 0 0 0 2px #a86a2a;
    position: relative;
}
.cell-btn::after {
    content: "";
    position: absolute;
    right: -2px;
    bottom: -2px;
    width: 4px;
    height: 4px;
    background: #000;
    border: 1px solid #fff;
    border-width: 1px 0 0 1px;
}

/* vertical scrollbar */
.vscroll {
    width: 21px;
    flex: none;
    background: linear-gradient(#e4e4e4 13px, #3c3c3c 13px);
    box-shadow: inset 1px 0 0 #6b6b6b;
    display: flex;
    flex-direction: column;
    align-items: center;
    padding-top: 6px;
}
.split-h {
    width: 17px;
    height: 7px;
    box-sizing: border-box;
    background: #fff;
    border: 1px solid #ccc;
    box-shadow: inset 0 1px 0 #999;
}
.vscroll-up {
    height: 22px;
    display: flex;
    align-items: center;
}
.arrow-up {
    width: 0;
    height: 0;
    border-left: 6px solid transparent;
    border-right: 6px solid transparent;
    border-bottom: 6px solid #b4b4b4;
}
.vscroll-thumb {
    width: 17px;
    height: 8px;
    background: linear-gradient(90deg, #f6f6f6, #d8d8d8);
}
.arrow-down {
    margin-top: auto;
    margin-bottom: 9px;
    width: 0;
    height: 0;
    border-left: 6px solid transparent;
    border-right: 6px solid transparent;
    border-top: 6px solid #b4b4b4;
}

/* sheet tabs and horizontal scrollbar */
.sheet-tabs {
    height: 20px;
    flex: none;
    display: flex;
    align-items: stretch;
    background: linear-gradient(#505050, #757575);
    border-top: 1px solid #555;
    box-sizing: border-box;
}
.sheet-nav {
    width: 79px;
    flex: none;
    box-sizing: border-box;
    background: linear-gradient(#d9dcdf, #b7babd);
    border-right: 1px solid #666;
    display: flex;
    align-items: center;
    padding-left: 2px;
}
.sheet-tab {
    width: 76px;
    flex: none;
    box-sizing: border-box;
    padding-left: 9px;
    background: linear-gradient(#fff, #dfe3e8);
    font-family: "Liberation Serif", serif;
    font-weight: bold;
    font-size: 17px;
    letter-spacing: 0.8px;
    line-height: 19px;
    color: #333;
    clip-path: polygon(0 0, 100% 0, 67px 100%, 0 100%);
}
.new-tab {
    width: 44px;
    flex: none;
    margin-left: -7px;
    background: linear-gradient(#b8bec4, #9aa0a6);
    clip-path: polygon(10px 0, 100% 0, 30px 100%, 0 100%);
    display: flex;
    align-items: center;
    padding-left: 8px;
    box-sizing: border-box;
}
.tabs-fill {
    flex: 1;
}
.split-v {
    width: 8px;
    flex: none;
    box-sizing: border-box;
    background: #fff;
    border: 2px solid #fff;
    border-left-width: 3px;
    border-right-width: 3px;
    box-shadow: inset 0 0 0 1px #888;
}
.hscroll {
    width: 385px;
    flex: none;
    background: #3c3c3c;
    display: flex;
    align-items: center;
    box-sizing: border-box;
}
.arrow-left {
    margin-left: 6px;
    width: 0;
    height: 0;
    border-top: 6px solid transparent;
    border-bottom: 6px solid transparent;
    border-right: 6px solid #b4b4b4;
}
.hscroll-thumb {
    margin-left: 10px;
    width: 246px;
    height: 100%;
    background: linear-gradient(#fafafa, #d5d5d5);
    display: flex;
    align-items: center;
    justify-content: center;
}
.grip {
    width: 7px;
    height: 7px;
    background: repeating-linear-gradient(90deg, #777 0 1px, transparent 1px 2px);
}
.arrow-right {
    margin-left: auto;
    margin-right: 9px;
    width: 0;
    height: 0;
    border-top: 6px solid transparent;
    border-bottom: 6px solid transparent;
    border-left: 6px solid #b4b4b4;
}
.tabs-end {
    width: 20px;
    flex: none;
    background: #3c3c3c;
}

/* status bar */
.statusbar {
    height: 27px;
    flex: none;
    display: flex;
    align-items: center;
    background: linear-gradient(#3f4450, #3a3e48 35%, #3f3f3f 40%, #333);
    color: #e4e4e4;
}
.ready {
    margin-left: 7px;
    font-size: 12.5px;
}
.status-sep {
    margin-left: 8px;
    width: 1px;
    height: 20px;
    background: #111;
    box-shadow: 1px 0 0 #666;
}
.macro {
    margin-left: 10px;
    margin-top: -4px;
}
.status-sep-2 {
    margin-left: 11px;
}
.status-right {
    margin-left: auto;
    width: 296px;
    height: 100%;
    box-sizing: border-box;
    border-left: 1px solid #222;
    background: linear-gradient(#d2d2d2, #9a9a9a 55%, #6f6f6f);
    display: flex;
    align-items: center;
    padding-left: 4px;
}
.views {
    width: 69px;
    height: 22px;
    box-sizing: border-box;
    border: 1px solid #777;
    display: flex;
    background: linear-gradient(#bdbdbd, #8f8f8f);
}
.view {
    flex: 1;
    display: flex;
    align-items: center;
    justify-content: center;
    border-right: 1px solid #888;
}
.view:last-child {
    border-right: 0;
}
.view-on {
    background: linear-gradient(#f9c866, #fde08e);
}
.zoom-pct {
    margin-left: 9px;
    width: 41px;
    font-size: 12.5px;
    color: #d8e8f6;
}
.zoom-btn {
    width: 20px;
    height: 20px;
    box-sizing: border-box;
    border: 1px solid #666;
    border-radius: 50%;
    background: radial-gradient(#f2f2f2, #a5a5a5);
    position: relative;
    flex: none;
}
.zoom-minus {
    position: absolute;
    left: 4px;
    top: 8px;
    width: 10px;
    height: 2px;
    background: #555;
}
.zoom-plus {
    position: absolute;
    left: 8px;
    top: 4px;
    width: 2px;
    height: 10px;
    background: #555;
}
.zoom-track {
    width: 127px;
    height: 1px;
    background: #222;
    box-shadow: 0 1px 0 #ddd;
    display: flex;
    justify-content: center;
    align-items: center;
}
.zoom-thumb {
    flex: none;
    margin-left: 9px;
}

/* watermark floats over the sheet */
.watermark {
    position: absolute;
    left: 777px;
    top: 604px;
    width: 212px;
    color: rgba(150, 150, 150, 0.72);
    z-index: 2;
}
.wm-title {
    font-size: 24px;
    line-height: 33px;
    white-space: nowrap;
}
.wm-sub {
    font-size: 17px;
    line-height: 25px;
}

/* taskbar */
.taskbar {
    height: 50px;
    flex: none;
    background: #000;
    display: flex;
    color: #fff;
}
.task {
    width: 62px;
    flex: none;
    display: flex;
    flex-direction: column;
    align-items: center;
    justify-content: center;
    position: relative;
    box-sizing: border-box;
    padding-bottom: 2px;
}
.task-start {
    width: 59px;
}
.task-first {
    margin-left: 2px;
}
.task-open::after,
.task-current::after {
    content: "";
    position: absolute;
    bottom: 0;
    width: 51px;
    height: 3px;
    background: #f8f3b8;
}
.task-current {
    background: #2b2b2b;
}
.task-current::after {
    width: 100%;
}
.tray {
    flex: 1;
    display: flex;
    align-items: center;
    padding-left: 95px;
    font-size: 14px;
}
.tray svg:nth-child(2) {
    margin-left: 12px;
}
.lang {
    margin-left: 11px;
}
.clock {
    margin-left: 16px;
    display: flex;
    flex-direction: column;
    align-items: center;
    line-height: 22px;
    white-space: nowrap;
}
.notify {
    margin-left: 25px;
}
```
